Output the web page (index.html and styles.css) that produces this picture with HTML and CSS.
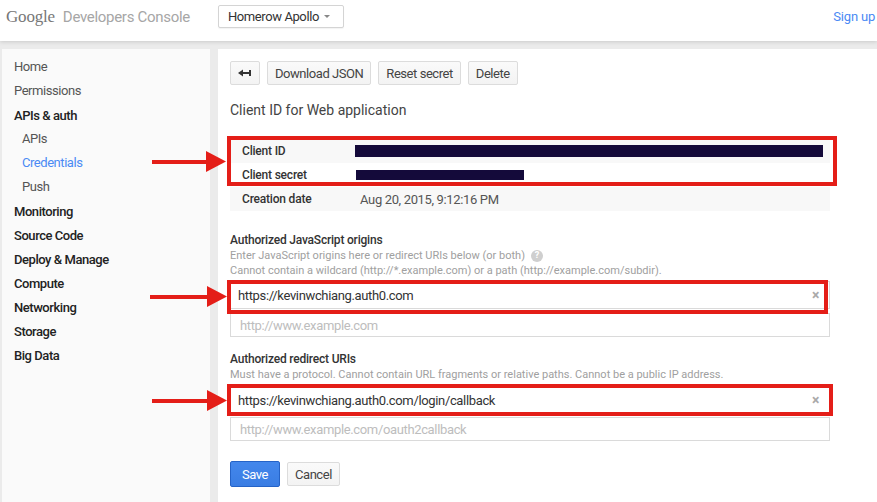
FILE: index.html
```html
<!DOCTYPE html>
<html lang="en">
<head>
<meta charset="utf-8">
<title>Google Developers Console</title>
<link rel="stylesheet" href="styles.css">
</head>
<body>
<header class="topbar">
  <div class="brand">
    <span class="brand-google">Google</span>
    <span class="brand-product">Developers Console</span>
  </div>
  <button class="project">Homerow Apollo<span class="caret"></span></button>
  <a class="signup" href="#">Sign up</a>
</header>

<div class="layout">
  <nav class="sidebar">
    <a class="nav-item" href="#">Home</a>
    <a class="nav-item" href="#">Permissions</a>
    <a class="nav-item strong" href="#">APIs &amp; auth</a>
    <a class="nav-item sub" href="#">APIs</a>
    <a class="nav-item sub active" href="#">Credentials</a>
    <a class="nav-item sub" href="#">Push</a>
    <a class="nav-item strong" href="#">Monitoring</a>
    <a class="nav-item strong" href="#">Source Code</a>
    <a class="nav-item strong" href="#">Deploy &amp; Manage</a>
    <a class="nav-item strong" href="#">Compute</a>
    <a class="nav-item strong" href="#">Networking</a>
    <a class="nav-item strong" href="#">Storage</a>
    <a class="nav-item strong" href="#">Big Data</a>
  </nav>

  <main class="content">
    <div class="toolbar">
      <button class="btn btn-icon" aria-label="Back">
        <svg width="14" height="10" viewBox="0 0 14 10"><path d="M0 5 L5 1.5 L5 8.5 Z" fill="#333"/><rect x="4" y="4" width="8" height="2" fill="#333"/><rect x="11" y="2" width="2" height="6" fill="#333"/></svg>
      </button>
      <button class="btn">Download JSON</button>
      <button class="btn">Reset secret</button>
      <button class="btn">Delete</button>
    </div>

    <h1 class="title">Client ID for Web application</h1>

    <div class="details">
      <div class="row shaded"><span class="label">Client ID</span><span class="value"><span class="redact redact-id"></span></span></div>
      <div class="row"><span class="label">Client secret</span><span class="value"><span class="redact redact-secret"></span></span></div>
      <div class="row shaded"><span class="label">Creation date</span><span class="value">Aug 20, 2015, 9:12:16 PM</span></div>
    </div>

    <section class="field field-origins">
      <h2 class="field-title">Authorized JavaScript origins</h2>
      <p class="hint">Enter JavaScript origins here or redirect URIs below (or both) <span class="help">?</span></p>
      <p class="hint">Cannot contain a wildcard (http://*.example.com) or a path (http://example.com/subdir).</p>
      <div class="uri filled"><span>https://kevinwchiang.auth0.com</span><span class="clear">×</span></div>
      <div class="uri empty">http://www.example.com</div>
    </section>

    <section class="field field-redirect">
      <h2 class="field-title">Authorized redirect URIs</h2>
      <p class="hint">Must have a protocol. Cannot contain URL fragments or relative paths. Cannot be a public IP address.</p>
      <div class="uri filled"><span>https://kevinwchiang.auth0.com/login/callback</span><span class="clear">×</span></div>
      <div class="uri empty">http://www.example.com/oauth2callback</div>
    </section>

    <div class="actions">
      <button class="btn btn-primary">Save</button>
      <button class="btn">Cancel</button>
    </div>
  </main>
</div>

<svg class="annotations" width="877" height="502" viewBox="0 0 877 502">
  <g fill="none" stroke="#e41e18" stroke-width="4">
    <rect x="229" y="138" width="606" height="46"/>
    <rect x="229" y="282" width="597" height="30"/>
    <rect x="229" y="386" width="602" height="28"/>
  </g>
  <g fill="#e41e18">
    <rect x="152" y="160" width="57" height="4"/>
    <path d="M206 151 L226 161.5 L206 172 Z"/>
    <rect x="150" y="295" width="59" height="4"/>
    <path d="M207 286 L227 296.5 L207 307 Z"/>
    <rect x="152" y="399" width="57" height="4"/>
    <path d="M207 390 L227 400.5 L207 411 Z"/>
  </g>
</svg>
</body>
</html>
```

FILE: styles.css
```css
* { box-sizing: border-box; }

html, body {
  margin: 0;
  padding: 0;
}

body {
  width: 877px;
  height: 502px;
  overflow: hidden;
  background: #ebebeb;
  font-family: Roboto, "Liberation Sans", Arial, sans-serif;
  color: #333;
  position: relative;
}

/* ---------- Header ---------- */
.topbar {
  height: 41px;
  background: #fff;
  display: flex;
  align-items: center;
  padding: 0 2px 8px 6px;
  box-shadow: 0 1px 4px rgba(0, 0, 0, 0.14);
  position: relative;
  z-index: 1;
}

.brand {
  display: flex;
  align-items: baseline;
  gap: 8px;
}

.brand-google {
  font-family: "Liberation Serif", "DejaVu Serif", serif;
  font-size: 17px;
  color: #777;
  letter-spacing: -0.2px;
}

.brand-product {
  font-size: 15px;
  color: #a6a6a6;
  letter-spacing: -0.3px;
}

.project {
  margin-left: 28px;
  height: 23px;
  display: flex;
  align-items: center;
  gap: 5px;
  padding: 0 13px 0 9px;
  background: #fff;
  border: 1px solid #d4d4d4;
  border-radius: 2px;
  box-shadow: 0 1px 1px rgba(0, 0, 0, 0.05);
  font-family: inherit;
  font-size: 13px;
  letter-spacing: -0.4px;
  color: #333;
}

.caret {
  width: 0;
  height: 0;
  border-left: 3px solid transparent;
  border-right: 3px solid transparent;
  border-top: 3px solid #888;
}

.signup {
  margin-left: auto;
  font-size: 13px;
  letter-spacing: -0.2px;
  color: #4a8af4;
  text-decoration: none;
}

/* ---------- Layout ---------- */
.layout {
  display: flex;
  gap: 8px;
  padding: 8px 0 0 2px;
  height: 461px;
}

.sidebar {
  width: 208px;
  background: #fafafa;
  display: flex;
  flex-direction: column;
  padding-top: 6px;
}

.nav-item {
  display: block;
  height: 24px;
  line-height: 24px;
  padding-left: 12px;
  font-size: 13px;
  letter-spacing: -0.45px;
  color: #555;
  text-decoration: none;
}

.nav-item.strong {
  color: #222;
  font-weight: 500;
  line-height: 26px;
}

.nav-item.sub {
  padding-left: 20px;
}

.nav-item.active {
  color: #4a8af4;
}

.content {
  flex: 1;
  background: #fff;
  padding: 12px 12px 0 12px;
}

/* ---------- Buttons ---------- */
.toolbar {
  display: flex;
  gap: 7px;
}

.btn {
  height: 24px;
  padding: 0 7px;
  font-family: inherit;
  font-size: 13px;
  letter-spacing: -0.45px;
  color: #444;
  background: linear-gradient(#fafafa, #f3f3f3);
  border: 1px solid #dcdcdc;
  border-radius: 2px;
  display: inline-flex;
  align-items: center;
  justify-content: center;
}

.btn-icon {
  width: 30px;
  padding: 0;
}

.btn-primary {
  width: 50px;
  height: 26px;
  color: #fff;
  background: linear-gradient(#4387ec, #3a7de3);
  border-color: #2563c7;
}

/* ---------- Title & details ---------- */
.title {
  margin: 15px 0 19px;
  font-size: 14px;
  font-weight: 400;
  line-height: 20px;
  color: #444;
}

.details {
  width: 600px;
}

.row {
  display: grid;
  grid-template-columns: 118px 1fr;
  align-items: center;
  height: 24px;
  padding-left: 12px;
}

.row.shaded {
  background: #f8f8f8;
}

.label {
  font-size: 12px;
  font-weight: 500;
  letter-spacing: -0.2px;
  color: #333;
}

.value {
  font-size: 13px;
  letter-spacing: -0.35px;
  color: #555;
}

.redact {
  display: block;
  background: #140a3a;
}

.redact-id {
  width: 468px;
  height: 12px;
  margin-left: -5px;
}

.redact-secret {
  width: 168px;
  height: 10px;
  margin-left: -4px;
}

/* ---------- Fields ---------- */
.field {
  width: 600px;
}

.field-origins {
  margin-top: 21px;
}

.field-redirect {
  margin-top: 14px;
}

.field-title {
  margin: 0;
  font-size: 12px;
  font-weight: 500;
  line-height: 16px;
  letter-spacing: -0.2px;
  color: #333;
}

.hint {
  margin: 0;
  font-size: 11px;
  line-height: 15px;
  color: #a0a0a0;
  display: flex;
  align-items: center;
  gap: 6px;
}

.help {
  display: inline-flex;
  align-items: center;
  justify-content: center;
  width: 12px;
  height: 12px;
  border-radius: 50%;
  background: #cfcfcf;
  color: #fff;
  font-size: 9px;
  font-weight: 700;
}

.uri {
  display: flex;
  align-items: center;
  justify-content: space-between;
  padding: 0 10px 0 7px;
  border: 1px solid #dadada;
  font-size: 13px;
  letter-spacing: -0.35px;
}

.uri.filled {
  height: 28px;
  margin-top: 3px;
  color: #333;
}

.uri.empty {
  height: 24px;
  margin-top: 4px;
  padding-left: 9px;
  color: #bdbdbd;
}

.field-redirect .uri.filled {
  margin-top: 4px;
}

.field-redirect .uri.empty {
  margin-top: 3px;
}

.clear {
  color: #aaa;
  font-size: 14px;
  font-weight: 700;
}

.actions {
  display: flex;
  gap: 7px;
  align-items: center;
  margin-top: 20px;
}

/* ---------- Annotation overlay ---------- */
.annotations {
  position: absolute;
  left: 0;
  top: 0;
  pointer-events: none;
  z-index: 5;
}
```
